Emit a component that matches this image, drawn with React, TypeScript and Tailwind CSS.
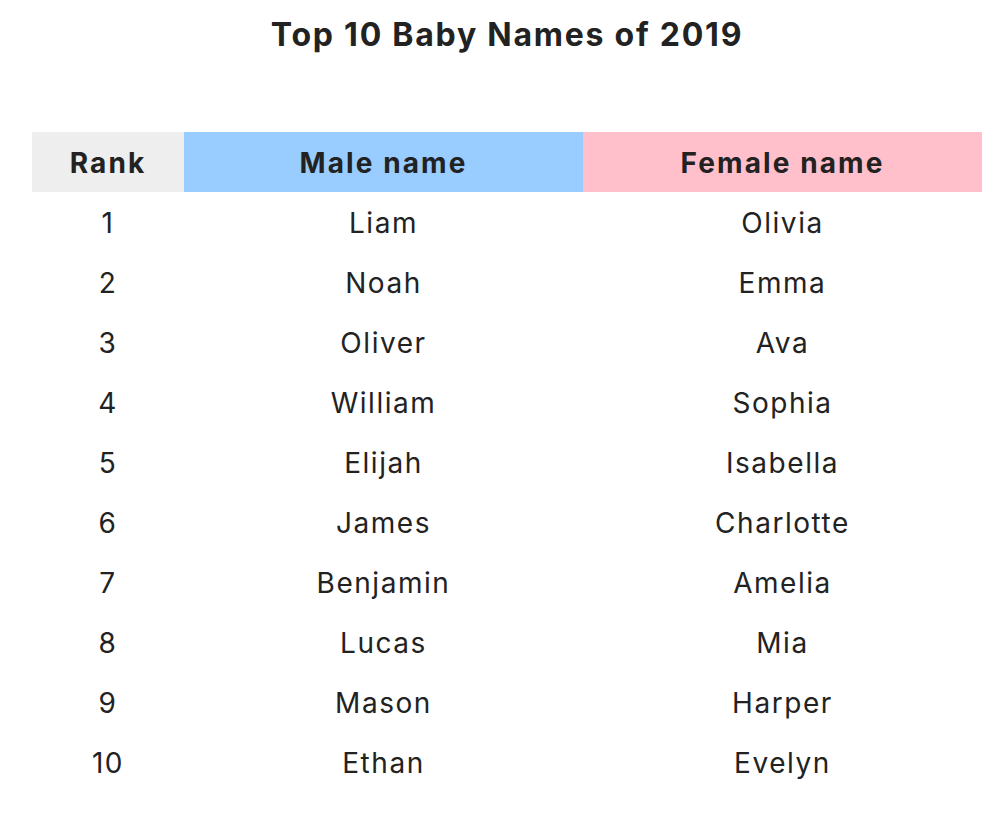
const rows: [number, string, string][] = [
  [1, "Liam", "Olivia"],
  [2, "Noah", "Emma"],
  [3, "Oliver", "Ava"],
  [4, "William", "Sophia"],
  [5, "Elijah", "Isabella"],
  [6, "James", "Charlotte"],
  [7, "Benjamin", "Amelia"],
  [8, "Lucas", "Mia"],
  [9, "Mason", "Harper"],
  [10, "Ethan", "Evelyn"],
];

export default function App() {
  return (
    <div
      className="w-[998px] h-[829px] bg-white text-[#222222]"
      style={{ fontFamily: "Inter, 'Noto Sans', sans-serif" }}
    >
      <h1 className="ml-[32px] w-[950px] h-[70px] pt-[15px] text-center text-[32px] leading-[40px] font-bold tracking-[0.055em]">
        Top 10 Baby Names of 2019
      </h1>
      <table className="ml-[32px] mt-[62px] w-[950px] table-fixed border-collapse text-[28px] tracking-[0.055em]">
        <thead>
          <tr className="h-[60px] font-bold tracking-[0.075em]">
            <th className="w-[152px] bg-[#eeeeee] p-0 pt-[1px]">Rank</th>
            <th className="w-[399px] bg-[#99ccff] p-0 pt-[1px]">Male name</th>
            <th className="w-[399px] bg-[#ffc0cb] p-0 pt-[1px]">Female name</th>
          </tr>
        </thead>
        <tbody>
          {rows.map(([rank, male, female]) => (
            <tr key={rank} className="h-[60px] text-center">
              <td className="p-0 pt-[2px]">{rank}</td>
              <td className="p-0 pt-[2px]">{male}</td>
              <td className="p-0 pt-[2px]">{female}</td>
            </tr>
          ))}
        </tbody>
      </table>
    </div>
  );
}
